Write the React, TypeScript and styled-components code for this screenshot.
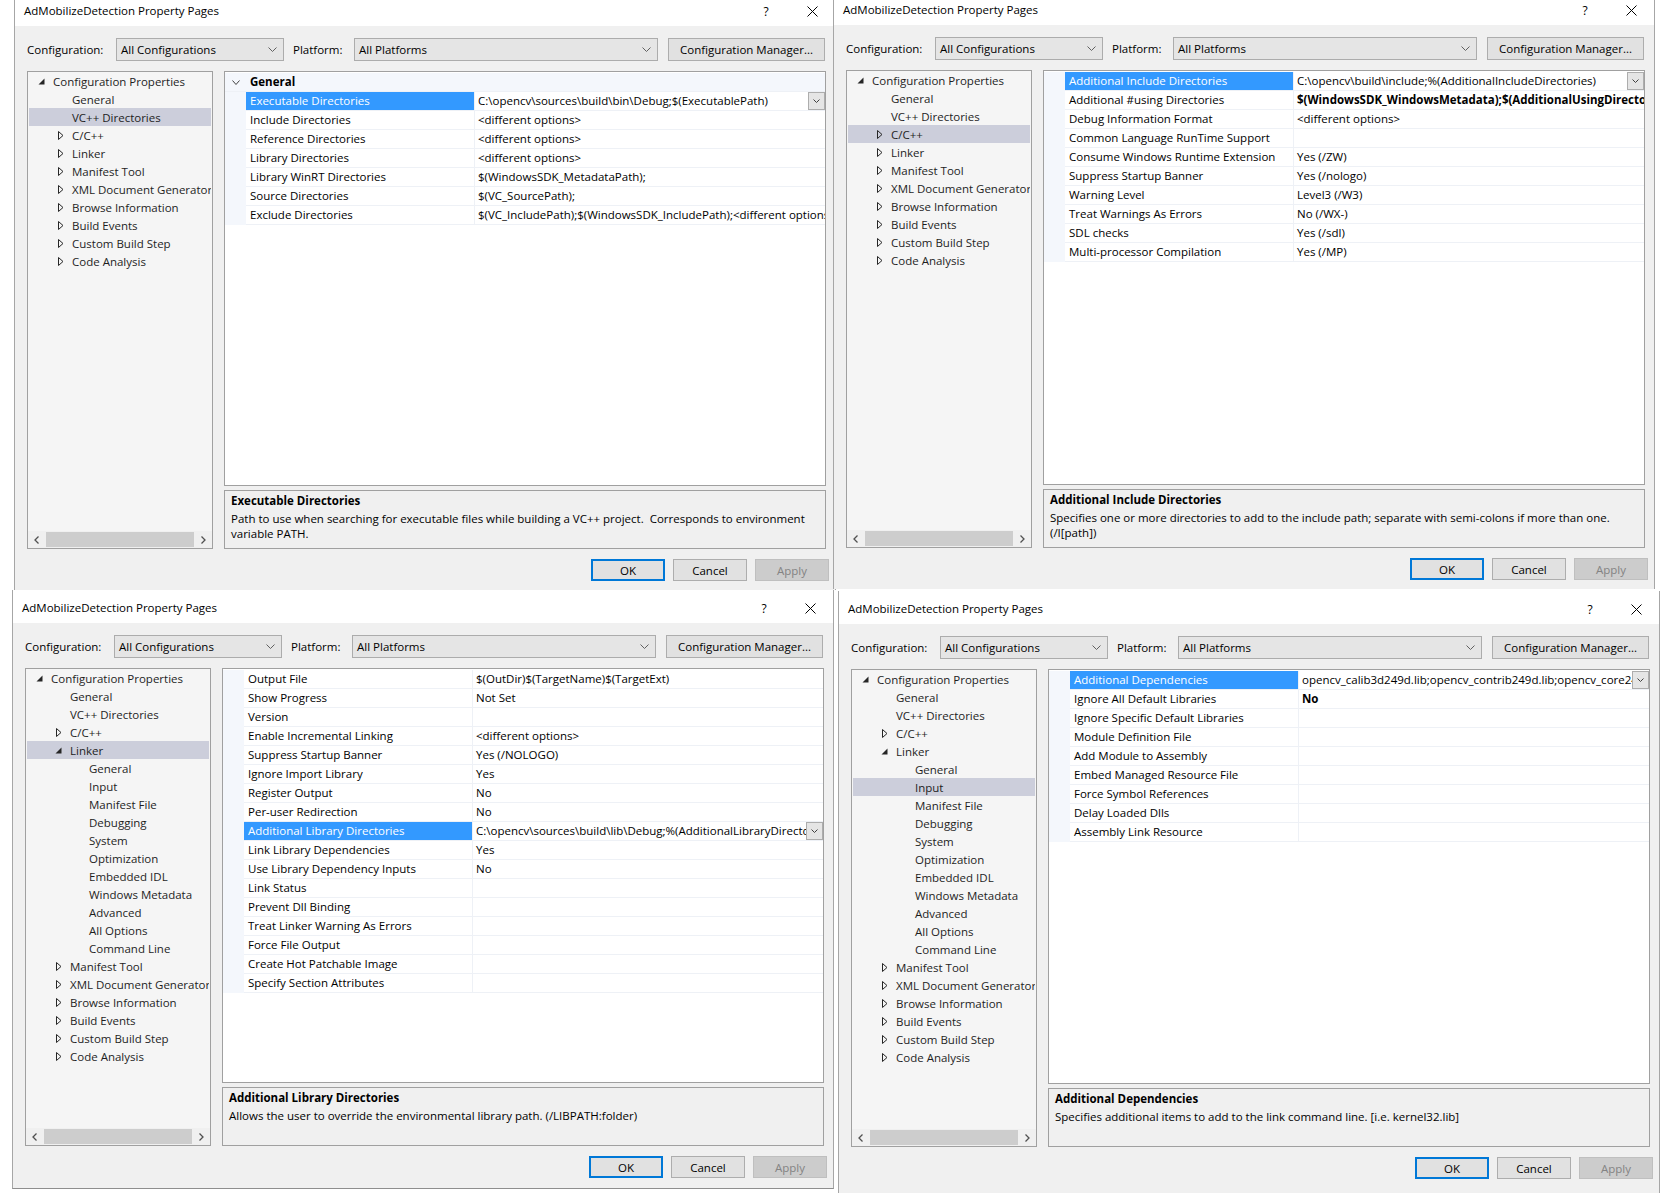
import React from "react";
import styled, { createGlobalStyle, css } from "styled-components";

const FONT = `"Open Sans", "Noto Sans", "Liberation Sans", sans-serif`;

const GlobalStyle = createGlobalStyle`
  * { box-sizing: border-box; }
  html, body { margin: 0; padding: 0; background: #ffffff; }
  body { font-family: ${FONT}; font-size: 11.5px; color: #000; overflow: hidden; }
  #root { width: 1660px; height: 1193px; }
`;

type TreeItem = { label: string; level: number; arrow?: "open" | "closed"; selected?: boolean };
type Prop = { name: string; value?: string; selected?: boolean; bold?: boolean; dropdown?: boolean };
type DialogData = {
  dx: number;
  dy: number;
  titleH: number;
  height: number;
  bottom: boolean;
  tree: TreeItem[];
  header?: string;
  props: Prop[];
  descTitle: string;
  descLines: string[];
};

/* ---------- layout ---------- */

const Page = styled.div`
  width: 1660px;
  height: 1193px;
  display: flex;
  flex-direction: column;
  background: #ffffff;
  overflow: hidden;
`;

const DialogRow = styled.div<{ $pl: number; $h: number }>`
  display: flex;
  align-items: flex-start;
  flex: none;
  height: ${(p) => p.$h}px;
  padding-left: ${(p) => p.$pl}px;
`;

const Dialog = styled.section<{ $dx: number; $dy: number; $h: number; $bottom: boolean }>`
  flex: none;
  width: 822px;
  height: ${(p) => p.$h}px;
  margin-left: ${(p) => p.$dx}px;
  margin-top: ${(p) => p.$dy}px;
  display: flex;
  flex-direction: column;
  background: #f0f0f0;
  border-left: 1px solid #a6a6a6;
  border-right: 1px solid #a6a6a6;
  border-bottom: ${(p) => (p.$bottom ? "1px solid #8e8e8e" : "none")};
`;

const TitleBar = styled.header<{ $h: number }>`
  flex: none;
  height: ${(p) => p.$h}px;
  background: #ffffff;
  display: flex;
  align-items: flex-end;
  padding: 0 0 7px 9px;
`;

const TitleText = styled.div`
  font-size: 11.5px;
  line-height: 16px;
  color: #000;
  white-space: nowrap;
`;

const TitleButtons = styled.div`
  margin-left: auto;
  display: flex;
`;

const TitleButton = styled.div`
  width: 46px;
  height: 16px;
  display: flex;
  align-items: center;
  justify-content: center;
  font-size: 12px;
  color: #000;
`;

const Body = styled.div`
  flex: 1;
  display: flex;
  flex-direction: column;
  padding: 12px 9px 0 12px;
`;

const TopRow = styled.div`
  display: flex;
  align-items: center;
  height: 23px;
  flex: none;
`;

const FieldLabel = styled.div<{ $w: number; $ml?: number }>`
  width: ${(p) => p.$w}px;
  margin-left: ${(p) => p.$ml ?? 0}px;
  flex: none;
  line-height: 23px;
  white-space: nowrap;
`;

const Combo = styled.div<{ $w: number }>`
  width: ${(p) => p.$w}px;
  height: 23px;
  flex: none;
  display: flex;
  align-items: center;
  padding: 0 6px 0 4px;
  background: #e5e5e5;
  border: 1px solid #acacac;
  white-space: nowrap;
`;

const ComboText = styled.span`
  flex: 1;
`;

const Button = styled.div<{ $w: number; $h: number; $ml?: number; $variant?: "default" | "primary" | "disabled" }>`
  width: ${(p) => p.$w}px;
  height: ${(p) => p.$h}px;
  margin-left: ${(p) => p.$ml ?? 0}px;
  flex: none;
  display: flex;
  align-items: center;
  justify-content: center;
  background: #e1e1e1;
  border: 1px solid #adadad;
  color: #000;
  white-space: nowrap;
  ${(p) =>
    p.$variant === "primary" &&
    css`
      border: 2px solid #0078d7;
    `}
  ${(p) =>
    p.$variant === "disabled" &&
    css`
      background: #cccccc;
      border-color: #bfbfbf;
      color: #838383;
    `}
`;

const Main = styled.div`
  display: flex;
  gap: 11px;
  margin-top: 10px;
  height: 478px;
  flex: none;
`;

/* ---------- tree ---------- */

const Tree = styled.div`
  width: 186px;
  flex: none;
  display: flex;
  flex-direction: column;
  background: #f5f5f5;
  border: 1px solid #a0a0a0;
`;

const TreeList = styled.div`
  flex: 1;
  overflow: hidden;
`;

const TreeRow = styled.div<{ $level: number; $selected: boolean }>`
  height: 18px;
  margin: 0 1px;
  display: flex;
  align-items: center;
  padding-left: ${(p) => 9 + p.$level * 19}px;
  white-space: nowrap;
  overflow: hidden;
  color: #1e1e1e;
  background: ${(p) => (p.$selected ? "#cccedb" : "transparent")};
`;

const ArrowBox = styled.span<{ $pad: number }>`
  width: 15px;
  flex: none;
  display: flex;
  align-items: center;
  padding-left: ${(p) => p.$pad}px;
`;

const Scrollbar = styled.div`
  flex: none;
  height: 17px;
  display: flex;
  align-items: stretch;
  background: #f0f0f0;
`;

const ScrollArrow = styled.div`
  width: 17px;
  flex: none;
  display: flex;
  align-items: center;
  justify-content: center;
`;

const ScrollThumb = styled.div`
  flex: 1;
  margin: 1px 1px;
  background: #cdcdcd;
`;

/* ---------- grid ---------- */

const RightCol = styled.div`
  width: 602px;
  flex: none;
  display: flex;
  flex-direction: column;
  gap: 4px;
`;

const Grid = styled.div`
  flex: 1;
  padding-top: 1px;
  background: #ffffff;
  border: 1px solid #a0a0a0;
  overflow: hidden;
`;

const GridRow = styled.div`
  display: flex;
  height: 19px;
`;

const HeaderRow = styled.div`
  display: flex;
  height: 19px;
  background: #f4f7fc;
  border-bottom: 1px solid #eef1f6;
`;

const Gutter = styled.div`
  width: 21px;
  flex: none;
  background: #f4f7fc;
  display: flex;
  align-items: center;
  justify-content: center;
`;

const HeaderTitle = styled.div`
  font-weight: 700;
  padding-left: 4px;
  line-height: 18px;
`;

const NameCell = styled.div<{ $selected: boolean }>`
  width: 228px;
  flex: none;
  padding-left: 4px;
  line-height: 18px;
  white-space: nowrap;
  overflow: hidden;
  border-bottom: 1px solid #eef1f6;
  background: ${(p) => (p.$selected ? "#3399ff" : "#ffffff")};
  color: ${(p) => (p.$selected ? "#ffffff" : "#000000")};
`;

const ValueCell = styled.div`
  flex: 1;
  min-width: 0;
  display: flex;
  border-left: 1px solid #eef1f6;
  border-bottom: 1px solid #eef1f6;
`;

const ValueText = styled.div<{ $bold: boolean }>`
  flex: 1;
  min-width: 0;
  padding-left: 3px;
  line-height: 18px;
  white-space: nowrap;
  overflow: hidden;
  font-weight: ${(p) => (p.$bold ? 700 : 400)};
`;

const DropButton = styled.div`
  width: 17px;
  height: 18px;
  flex: none;
  display: flex;
  align-items: center;
  justify-content: center;
  background: #e5e5e5;
  border: 1px solid #adadad;
`;

const Desc = styled.div`
  height: 59px;
  flex: none;
  padding: 2px 6px 0 6px;
  background: #f0f0f0;
  border: 1px solid #a0a0a0;
  overflow: hidden;
`;

const DescTitle = styled.div`
  font-weight: 700;
  line-height: 16px;
`;

const DescBody = styled.div`
  margin-top: 2px;
`;

const DescLine = styled.div`
  line-height: 15px;
  white-space: pre;
`;

const ButtonRow = styled.div`
  display: flex;
  justify-content: flex-end;
  gap: 8px;
  margin-top: 10px;
  margin-right: -3px;
  flex: none;
`;

/* ---------- icons ---------- */

const Chevron = ({ w, h, color = "#606060" }: { w: number; h: number; color?: string }) => (
  <svg width={w} height={h} viewBox={`0 0 ${w} ${h}`}>
    <polyline
      points={`0.5,0.5 ${w / 2},${h - 0.5} ${w - 0.5},0.5`}
      fill="none"
      stroke={color}
      strokeWidth="1"
    />
  </svg>
);

const CloseIcon = () => (
  <svg width="11" height="11" viewBox="0 0 11 11">
    <path d="M0.5 0.5 L10.5 10.5 M10.5 0.5 L0.5 10.5" stroke="#000" strokeWidth="1" />
  </svg>
);

const OpenArrow = () => (
  <svg width="7" height="7" viewBox="0 0 7 7">
    <polygon points="6.5,0.5 6.5,6.5 0.5,6.5" fill="#262626" />
  </svg>
);

const ClosedArrow = () => (
  <svg width="6" height="9" viewBox="0 0 6 9">
    <polygon points="0.5,0.5 5,4.5 0.5,8.5" fill="none" stroke="#262626" strokeWidth="1" />
  </svg>
);

const ScrollLeft = () => (
  <svg width="5" height="8" viewBox="0 0 5 8">
    <polyline points="4.5,0.5 1,4 4.5,7.5" fill="none" stroke="#505050" strokeWidth="1.3" />
  </svg>
);

const ScrollRight = () => (
  <svg width="5" height="8" viewBox="0 0 5 8">
    <polyline points="0.5,0.5 4,4 0.5,7.5" fill="none" stroke="#505050" strokeWidth="1.3" />
  </svg>
);

/* ---------- data ---------- */

const closedItems = (labels: string[], level: number): TreeItem[] =>
  labels.map((label) => ({ label, level, arrow: "closed" as const }));

const treeTop = (sel: "vc" | "cpp"): TreeItem[] => [
  { label: "Configuration Properties", level: 0, arrow: "open" },
  { label: "General", level: 1 },
  { label: "VC++ Directories", level: 1, selected: sel === "vc" },
  { label: "C/C++", level: 1, arrow: "closed", selected: sel === "cpp" },
  ...closedItems(
    [
      "Linker",
      "Manifest Tool",
      "XML Document Generator",
      "Browse Information",
      "Build Events",
      "Custom Build Step",
      "Code Analysis",
    ],
    1
  ),
];

const linkerChildren = [
  "General",
  "Input",
  "Manifest File",
  "Debugging",
  "System",
  "Optimization",
  "Embedded IDL",
  "Windows Metadata",
  "Advanced",
  "All Options",
  "Command Line",
];

const treeLinker = (sel: string): TreeItem[] => [
  { label: "Configuration Properties", level: 0, arrow: "open" },
  { label: "General", level: 1 },
  { label: "VC++ Directories", level: 1 },
  { label: "C/C++", level: 1, arrow: "closed" },
  { label: "Linker", level: 1, arrow: "open", selected: sel === "Linker" },
  ...linkerChildren.map((label) => ({ label, level: 2, selected: sel === label })),
  ...closedItems(
    ["Manifest Tool", "XML Document Generator", "Browse Information", "Build Events", "Custom Build Step", "Code Analysis"],
    1
  ),
];

const dialogs: DialogData[] = [
  {
    dx: 0,
    dy: 0,
    titleH: 26,
    height: 590,
    bottom: false,
    tree: treeTop("vc"),
    header: "General",
    props: [
      {
        name: "Executable Directories",
        value: "C:\\opencv\\sources\\build\\bin\\Debug;$(ExecutablePath)",
        selected: true,
        dropdown: true,
      },
      { name: "Include Directories", value: "<different options>" },
      { name: "Reference Directories", value: "<different options>" },
      { name: "Library Directories", value: "<different options>" },
      { name: "Library WinRT Directories", value: "$(WindowsSDK_MetadataPath);" },
      { name: "Source Directories", value: "$(VC_SourcePath);" },
      { name: "Exclude Directories", value: "$(VC_IncludePath);$(WindowsSDK_IncludePath);<different options>" },
    ],
    descTitle: "Executable Directories",
    descLines: [
      "Path to use when searching for executable files while building a VC++ project.  Corresponds to environment",
      "variable PATH.",
    ],
  },
  {
    dx: -3,
    dy: 0,
    titleH: 25,
    height: 589,
    bottom: false,
    tree: treeTop("cpp"),
    props: [
      {
        name: "Additional Include Directories",
        value: "C:\\opencv\\build\\include;%(AdditionalIncludeDirectories)",
        selected: true,
        dropdown: true,
      },
      {
        name: "Additional #using Directories",
        value: "$(WindowsSDK_WindowsMetadata);$(AdditionalUsingDirectories)",
        bold: true,
      },
      { name: "Debug Information Format", value: "<different options>" },
      { name: "Common Language RunTime Support", value: "" },
      { name: "Consume Windows Runtime Extension", value: "Yes (/ZW)" },
      { name: "Suppress Startup Banner", value: "Yes (/nologo)" },
      { name: "Warning Level", value: "Level3 (/W3)" },
      { name: "Treat Warnings As Errors", value: "No (/WX-)" },
      { name: "SDL checks", value: "Yes (/sdl)" },
      { name: "Multi-processor Compilation", value: "Yes (/MP)" },
    ],
    descTitle: "Additional Include Directories",
    descLines: [
      "Specifies one or more directories to add to the include path; separate with semi-colons if more than one.",
      "(/I[path])",
    ],
  },
  {
    dx: 0,
    dy: 0,
    titleH: 33,
    height: 599,
    bottom: true,
    tree: treeLinker("Linker"),
    props: [
      { name: "Output File", value: "$(OutDir)$(TargetName)$(TargetExt)" },
      { name: "Show Progress", value: "Not Set" },
      { name: "Version", value: "" },
      { name: "Enable Incremental Linking", value: "<different options>" },
      { name: "Suppress Startup Banner", value: "Yes (/NOLOGO)" },
      { name: "Ignore Import Library", value: "Yes" },
      { name: "Register Output", value: "No" },
      { name: "Per-user Redirection", value: "No" },
      {
        name: "Additional Library Directories",
        value: "C:\\opencv\\sources\\build\\lib\\Debug;%(AdditionalLibraryDirectories)",
        selected: true,
        dropdown: true,
      },
      { name: "Link Library Dependencies", value: "Yes" },
      { name: "Use Library Dependency Inputs", value: "No" },
      { name: "Link Status", value: "" },
      { name: "Prevent Dll Binding", value: "" },
      { name: "Treat Linker Warning As Errors", value: "" },
      { name: "Force File Output", value: "" },
      { name: "Create Hot Patchable Image", value: "" },
      { name: "Specify Section Attributes", value: "" },
    ],
    descTitle: "Additional Library Directories",
    descLines: ["Allows the user to override the environmental library path. (/LIBPATH:folder)"],
  },
  {
    dx: 4,
    dy: 1,
    titleH: 33,
    height: 602,
    bottom: false,
    tree: treeLinker("Input"),
    props: [
      {
        name: "Additional Dependencies",
        value: "opencv_calib3d249d.lib;opencv_contrib249d.lib;opencv_core249d.lib;opencv_features2d249d.lib",
        selected: true,
        dropdown: true,
      },
      { name: "Ignore All Default Libraries", value: "No", bold: true },
      { name: "Ignore Specific Default Libraries", value: "" },
      { name: "Module Definition File", value: "" },
      { name: "Add Module to Assembly", value: "" },
      { name: "Embed Managed Resource File", value: "" },
      { name: "Force Symbol References", value: "" },
      { name: "Delay Loaded Dlls", value: "" },
      { name: "Assembly Link Resource", value: "" },
    ],
    descTitle: "Additional Dependencies",
    descLines: ["Specifies additional items to add to the link command line. [i.e. kernel32.lib]"],
  },
];

/* ---------- components ---------- */

function PropertyDialog({ d }: { d: DialogData }) {
  return (
    <Dialog $dx={d.dx} $dy={d.dy} $h={d.height} $bottom={d.bottom}>
      <TitleBar $h={d.titleH}>
        <TitleText>AdMobilizeDetection Property Pages</TitleText>
        <TitleButtons>
          <TitleButton>?</TitleButton>
          <TitleButton>
            <CloseIcon />
          </TitleButton>
        </TitleButtons>
      </TitleBar>
      <Body>
        <TopRow>
          <FieldLabel $w={89}>Configuration:</FieldLabel>
          <Combo $w={168}>
            <ComboText>All Configurations</ComboText>
            <Chevron w={9} h={5} />
          </Combo>
          <FieldLabel $w={61} $ml={9}>
            Platform:
          </FieldLabel>
          <Combo $w={304}>
            <ComboText>All Platforms</ComboText>
            <Chevron w={9} h={5} />
          </Combo>
          <Button $w={157} $h={23} $ml={10}>
            Configuration Manager...
          </Button>
        </TopRow>
        <Main>
          <Tree>
            <TreeList>
              {d.tree.map((t, i) => (
                <TreeRow key={i} $level={t.level} $selected={!!t.selected}>
                  <ArrowBox $pad={t.arrow === "closed" ? 1 : 0}>
                    {t.arrow === "open" && <OpenArrow />}
                    {t.arrow === "closed" && <ClosedArrow />}
                  </ArrowBox>
                  {t.label}
                </TreeRow>
              ))}
            </TreeList>
            <Scrollbar>
              <ScrollArrow>
                <ScrollLeft />
              </ScrollArrow>
              <ScrollThumb />
              <ScrollArrow>
                <ScrollRight />
              </ScrollArrow>
            </Scrollbar>
          </Tree>
          <RightCol>
            <Grid>
              {d.header && (
                <HeaderRow>
                  <Gutter>
                    <Chevron w={8} h={5} color="#404040" />
                  </Gutter>
                  <HeaderTitle>{d.header}</HeaderTitle>
                </HeaderRow>
              )}
              {d.props.map((p, i) => (
                <GridRow key={i}>
                  <Gutter />
                  <NameCell $selected={!!p.selected}>{p.name}</NameCell>
                  <ValueCell>
                    <ValueText $bold={!!p.bold}>{p.value}</ValueText>
                    {p.dropdown && (
                      <DropButton>
                        <Chevron w={7} h={4} color="#404040" />
                      </DropButton>
                    )}
                  </ValueCell>
                </GridRow>
              ))}
            </Grid>
            <Desc>
              <DescTitle>{d.descTitle}</DescTitle>
              <DescBody>
                {d.descLines.map((l, i) => (
                  <DescLine key={i}>{l}</DescLine>
                ))}
              </DescBody>
            </Desc>
          </RightCol>
        </Main>
        <ButtonRow>
          <Button $w={74} $h={22} $variant="primary">
            OK
          </Button>
          <Button $w={74} $h={22}>
            Cancel
          </Button>
          <Button $w={74} $h={22} $variant="disabled">
            Apply
          </Button>
        </ButtonRow>
      </Body>
    </Dialog>
  );
}

export default function App() {
  return (
    <>
      <GlobalStyle />
      <Page>
        <DialogRow $pl={14} $h={590}>
          <PropertyDialog d={dialogs[0]} />
          <PropertyDialog d={dialogs[1]} />
        </DialogRow>
        <DialogRow $pl={12} $h={603}>
          <PropertyDialog d={dialogs[2]} />
          <PropertyDialog d={dialogs[3]} />
        </DialogRow>
      </Page>
    </>
  );
}
